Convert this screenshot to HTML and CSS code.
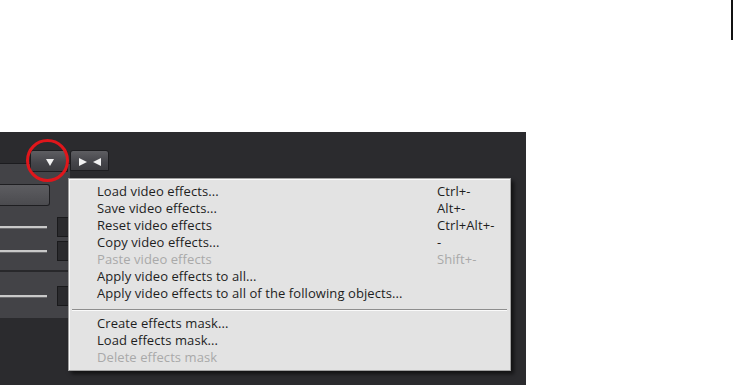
FILE: index.html
```html
<!DOCTYPE html>
<html lang="en">
<head>
    <meta charset="UTF-8">
    <title>Video effects menu</title>
    <link rel="stylesheet" href="styles.css">
</head>
<body>

    <div class="top">
        <div class="edge"></div>
    </div>

    <div class="app">
        <!-- Tab buttons -->
        <div class="tabs">
            <div class="tab tab-menu">
                <svg width="8" height="7" viewBox="0 0 8 7"><polygon points="0,0 8,0 4,7" fill="#f2f2f2"/></svg>
            </div>
            <div class="tab tab-fit">
                <svg width="22" height="8" viewBox="0 0 22 8"><polygon points="0,0 8,4 0,8" fill="#f2f2f2"/><polygon points="22,0 14,4 22,8" fill="#f2f2f2"/></svg>
            </div>
        </div>

        <div class="side">
            <div class="big-btn"></div>
            <div class="group group-first">
                <div class="slider-row"><div class="track"></div><div class="knob"></div></div>
                <div class="slider-row"><div class="track"></div><div class="knob"></div></div>
            </div>
            <div class="divider"></div>
            <div class="group group-second">
                <div class="slider-row"><div class="track"></div><div class="knob"></div></div>
            </div>
        </div>

        <!-- Highlight ring -->
        <div class="ring"></div>

        <!-- Context menu -->
        <div class="menu">
            <div class="item"><span>Load video effects...</span><span>Ctrl+-</span></div>
            <div class="item"><span>Save video effects...</span><span>Alt+-</span></div>
            <div class="item"><span>Reset video effects</span><span>Ctrl+Alt+-</span></div>
            <div class="item"><span>Copy video effects...</span><span>-</span></div>
            <div class="item disabled"><span>Paste video effects</span><span>Shift+-</span></div>
            <div class="item"><span>Apply video effects to all...</span><span></span></div>
            <div class="item"><span>Apply video effects to all of the following objects...</span><span></span></div>
            <div class="separator"></div>
            <div class="item"><span>Create effects mask...</span><span></span></div>
            <div class="item"><span>Load effects mask...</span><span></span></div>
            <div class="item disabled"><span>Delete effects mask</span><span></span></div>
        </div>
    </div>

</body>
</html>
```

FILE: styles.css
```css
/* General */
* {
    margin: 0;
    padding: 0;
    box-sizing: border-box;
}

body {
    background: #fff;
    font-family: 'Open Sans', 'Noto Sans', sans-serif;
    width: 733px;
    height: 385px;
    overflow: hidden;
}

.top {
    height: 132px;
    display: flex;
    justify-content: flex-end;
}

.edge {
    width: 2px;
    height: 40px;
    background: #111;
}

/* Dark application area */
.app {
    position: relative;
    width: 526px;
    height: 253px;
    background: #2b2b2e;
}

.tabs {
    position: relative;
    z-index: 1;
    display: flex;
    gap: 2px;
    height: 40px;
    padding: 18px 0 0 30px;
}

.tab {
    height: 22px;
    display: flex;
    align-items: center;
    justify-content: center;
    background: linear-gradient(#5e5e62, #45454a 60%, #3c3c40);
    border: 1px solid #1d1d20;
    border-radius: 3px 3px 0 0;
}

.tab-menu {
    width: 38px;
    padding: 3px 0 0 2px;
}

.tab-fit {
    width: 39px;
    height: 21px;
    padding-top: 3px;
}

/* Side panel */
.side {
    margin-top: -9px;
    width: 70px;
    height: 155px;
    overflow: hidden;
    background: #434347;
    border-top: 1px solid #1c1c1f;
    padding-top: 20px;
}

.big-btn {
    width: 50px;
    height: 22px;
    background: linear-gradient(#5d5d61, #4b4b4f);
    border: 1px solid #1e1e21;
    border-left: none;
    border-radius: 0 3px 3px 0;
}

.group-first {
    height: 64px;
    padding-top: 9px;
}

.group-second {
    height: 46px;
    padding-top: 12px;
}

.divider {
    height: 2px;
    background: #28282b;
}

.slider-row {
    height: 24px;
    display: flex;
    align-items: center;
}

.track {
    flex-shrink: 0;
    width: 47px;
    height: 2px;
    background: #c9c9c9;
    box-shadow: 0 1px 0 #6a6a6d;
    margin-right: 10px;
}

.knob {
    flex-shrink: 0;
    width: 20px;
    height: 20px;
    background: #2b2b2e;
    border: 1px solid #1a1a1c;
}

/* Red highlight ring around the menu button */
.ring {
    position: absolute;
    left: 26px;
    top: 7px;
    width: 43px;
    height: 43px;
    border: 3px solid #e0161b;
    border-radius: 50%;
    z-index: 2;
}

/* Context menu */
.menu {
    position: absolute;
    left: 68px;
    top: 46px;
    width: 443px;
    height: 193px;
    z-index: 3;
    background: #e3e3e3;
    border: 1px solid #a0a0a0;
    box-shadow: inset 1px 1px 0 #fbfbfb, 3px 3px 4px rgba(0, 0, 0, 0.6);
    padding: 4px 0 5px;
    font-size: 13px;
    letter-spacing: 0.08px;
    color: #1e1e1e;
}

.item {
    display: grid;
    grid-template-columns: 340px 1fr;
    height: 17px;
    line-height: 17px;
    padding-left: 28px;
    white-space: nowrap;
}

.item.disabled {
    color: #a9a9a9;
}

.separator {
    margin: 7px 3px 4px;
    height: 2px;
    border-top: 1px solid #8e8e8e;
    border-bottom: 1px solid #fafafa;
}
```
